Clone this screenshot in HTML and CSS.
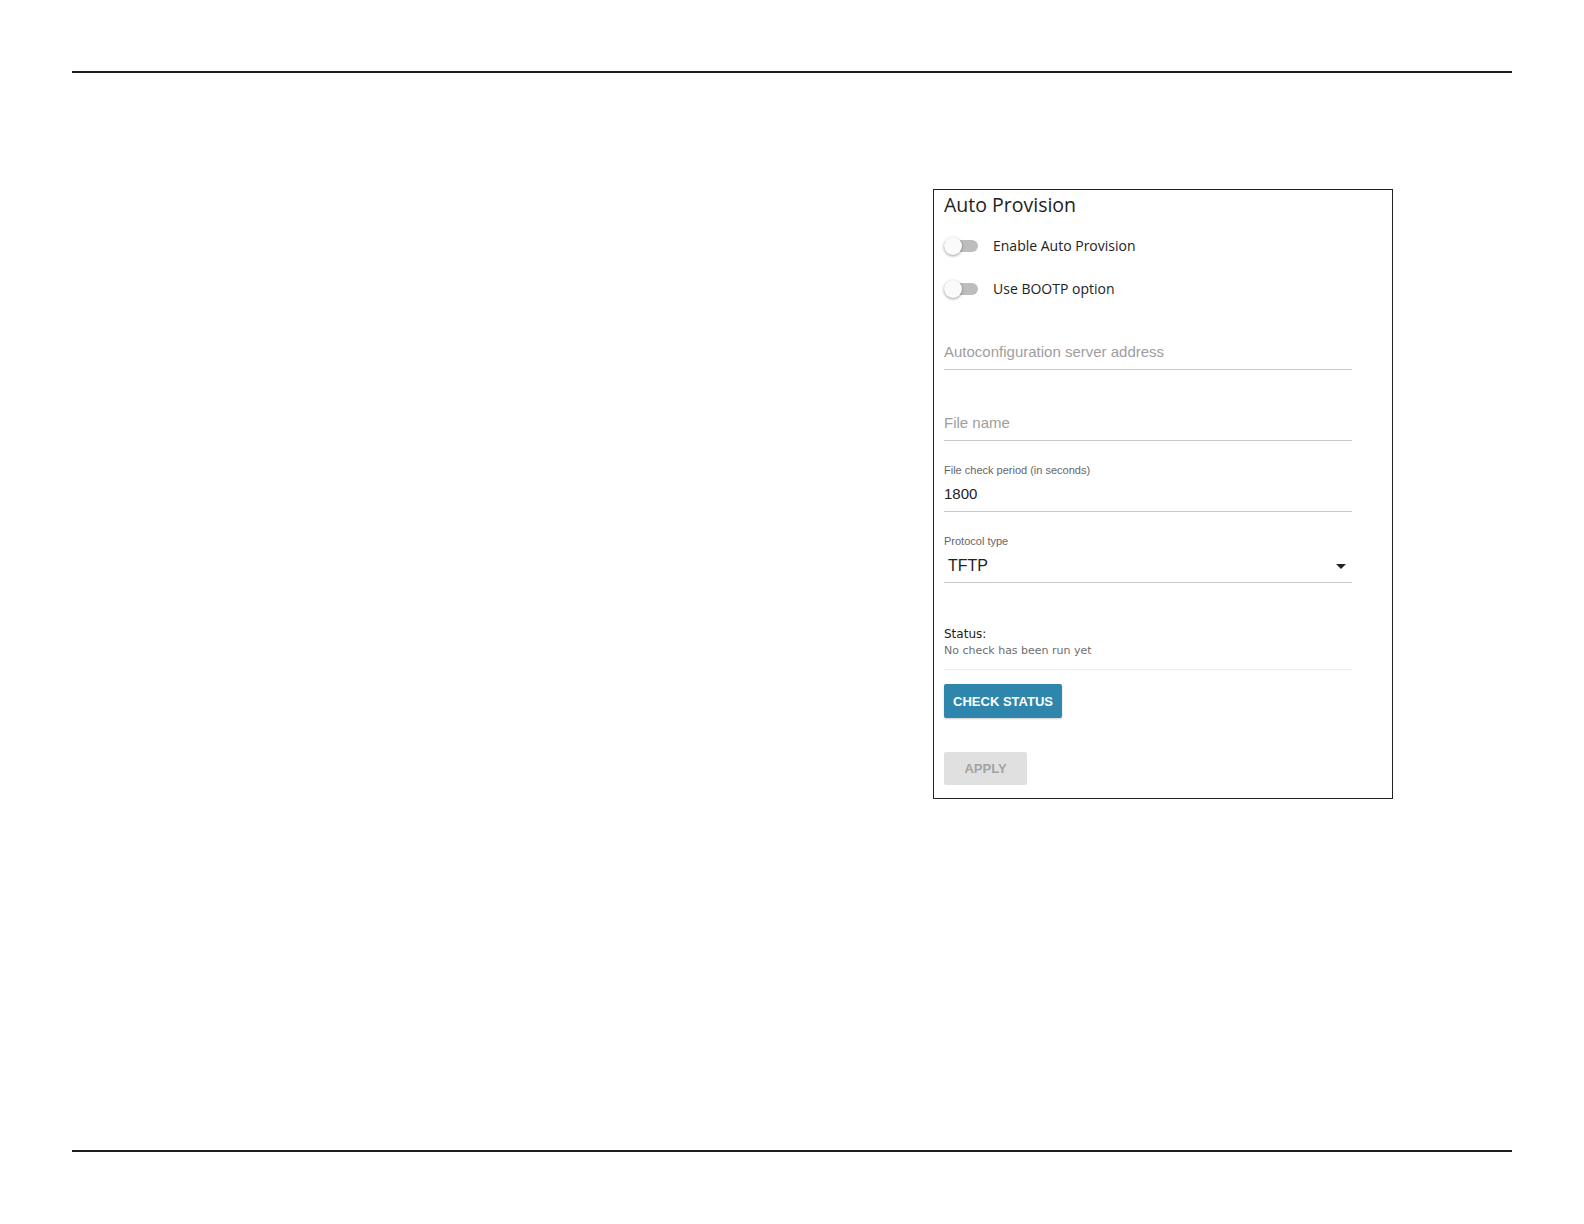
FILE: index.html
```html
<!DOCTYPE html>
<html lang="en">
<head>
  <meta charset="UTF-8">
  <meta name="viewport" content="width=device-width, initial-scale=1">
  <title>Auto Provision</title>
  <link rel="stylesheet" href="styles.css">
</head>
<body>
  <div class="rule"></div>

  <div class="main">
    <div class="side"></div>

    <div class="panel">
      <h2 class="panel-title">Auto Provision</h2>

      <label class="switch-row">
        <span class="switch"><span class="knob"></span></span>
        <span class="switch-label">Enable Auto Provision</span>
      </label>
      <label class="switch-row">
        <span class="switch"><span class="knob"></span></span>
        <span class="switch-label">Use BOOTP option</span>
      </label>

      <div class="fields">
        <div class="field">
          <div class="field-label"></div>
          <div class="field-input placeholder">Autoconfiguration server address</div>
        </div>
        <div class="field">
          <div class="field-label"></div>
          <div class="field-input placeholder">File name</div>
        </div>
        <div class="field">
          <div class="field-label">File check period (in seconds)</div>
          <div class="field-input">1800</div>
        </div>
        <div class="field">
          <div class="field-label">Protocol type</div>
          <div class="field-select">
            <span>TFTP</span>
            <span class="caret"></span>
          </div>
        </div>
      </div>

      <div class="status">
        <div class="status-title">Status:</div>
        <div class="status-text">No check has been run yet</div>
      </div>

      <button class="btn btn-primary">Check Status</button>
      <button class="btn btn-disabled" disabled>Apply</button>
    </div>
  </div>

  <div class="rule"></div>
</body>
</html>
```

FILE: styles.css
```css
/* page frame */
body { margin: 0; background: #fff; font-family: "Open Sans", Arial, sans-serif; color: #222; }
.rule { height: 2px; margin: 71px 72px 0; background: #1e1e1e; }
.rule + .main + .rule { margin-top: 0; }
.main { height: 1077px; margin: 0 72px; display: grid; grid-template-columns: 861px 460px; align-items: start; padding-top: 116px; box-sizing: border-box; }

/* panel */
.panel { border: 1px solid #222; padding: 1px 10px 13px; box-sizing: border-box; }
.panel-title { margin: 0 0 5px; font-size: 19.5px; font-weight: 400; line-height: 28px; color: #222; }

/* toggles */
.switch-row { display: flex; align-items: center; height: 43px; cursor: pointer; }
.switch { position: relative; width: 34px; height: 12px; background: #bdbdbd; border-radius: 6px; margin-right: 15px; }
.knob { position: absolute; left: 0; top: -3px; width: 18px; height: 18px; border-radius: 50%; background: #fafafa; box-shadow: 0 1px 3px rgba(0,0,0,0.4); }
.switch-label { font-size: 14px; color: #222; }

/* text fields */
.fields { margin-top: 11px; width: 408px; }
.field { margin-bottom: 22px; }
.field-label { height: 14px; margin-bottom: 4px; font-family: "Liberation Sans", Arial, sans-serif; font-size: 11px; line-height: 14px; color: #666; }
.field-input { font-family: "Liberation Sans", Arial, sans-serif; font-size: 15px; line-height: 26px; padding-bottom: 4px; border-bottom: 1px solid #c8c8c8; color: #222; }
.field-input.placeholder { color: #9e9e9e; }
.field-select { display: flex; justify-content: space-between; align-items: center; padding: 3px 6px 5px 4px; font-family: "Liberation Sans", Arial, sans-serif; font-size: 16px; line-height: 22px; border-bottom: 1px solid #c8c8c8; color: #222; }
.caret { width: 0; height: 0; border-left: 5px solid transparent; border-right: 5px solid transparent; border-top: 5px solid #222; }

/* status */
.status { margin-top: 41px; width: 408px; padding-bottom: 11px; border-bottom: 1px solid #eee; }
.status-title { font-family: "DejaVu Sans", Verdana, sans-serif; font-size: 12px; line-height: 20px; color: #222; }
.status-text { font-family: "DejaVu Sans", Verdana, sans-serif; font-size: 11px; line-height: 14px; color: #6e6e6e; }

/* buttons */
.btn { display: block; border: none; border-radius: 2px; font-family: "Liberation Sans", Arial, sans-serif; font-size: 13px; font-weight: bold; text-transform: uppercase; cursor: pointer; }
.btn-primary { margin-top: 14px; width: 118px; height: 34px; background: #2f86ad; color: #fff; box-shadow: 0 1px 2px rgba(0,0,0,0.2); }
.btn-disabled { margin-top: 34px; width: 83px; height: 33px; background: #e0e0e0; color: #a3a3a3; cursor: default; }
```
